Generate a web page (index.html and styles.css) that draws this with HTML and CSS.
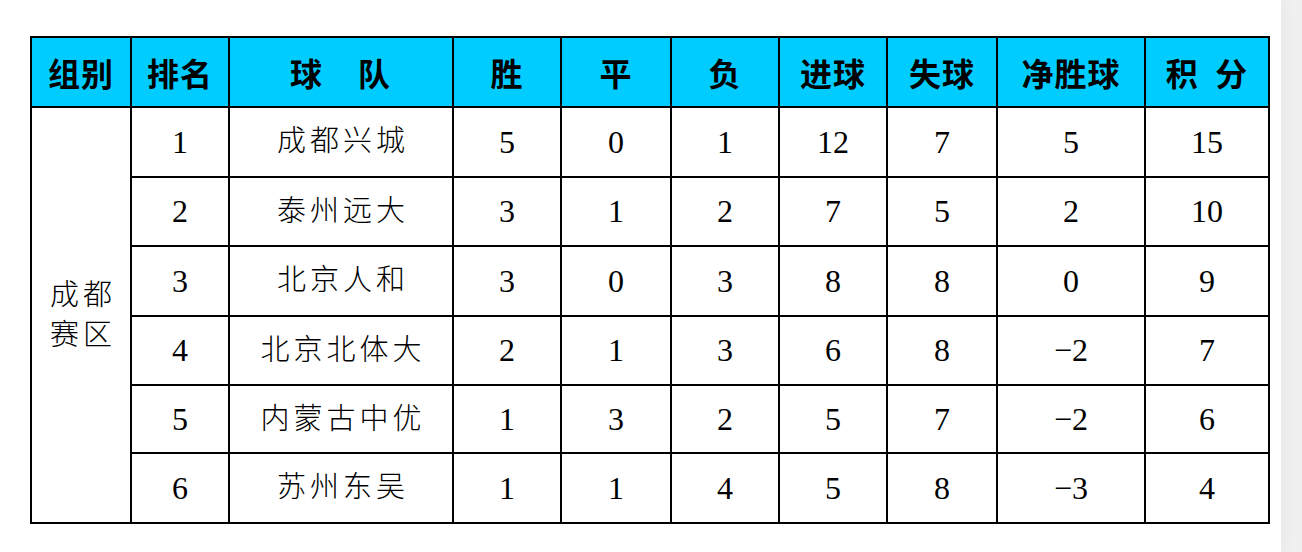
FILE: index.html
```html
<!DOCTYPE html>
<html lang="zh-CN">
<head>
<meta charset="utf-8">
<title>成都赛区积分榜</title>
<link rel="stylesheet" href="styles.css">
</head>
<body>
<div class="page">
  <table class="standings">
    <colgroup>
      <col class="c-group"><col class="c-rank"><col class="c-team"><col class="c-w"><col class="c-d"><col class="c-l"><col class="c-gf"><col class="c-ga"><col class="c-gd"><col class="c-pts">
    </colgroup>
    <thead>
      <tr>
        <th>组别</th><th>排名</th><th class="wide">球&emsp;队</th><th>胜</th><th>平</th><th>负</th><th>进球</th><th>失球</th><th>净胜球</th><th class="pts">积&nbsp;&nbsp;分</th>
      </tr>
    </thead>
    <tbody>
      <tr><td rowspan="6" class="group">成都<br>赛区</td><td>1</td><td class="team">成都兴城</td><td>5</td><td>0</td><td>1</td><td>12</td><td>7</td><td>5</td><td>15</td></tr>
      <tr><td>2</td><td class="team">泰州远大</td><td>3</td><td>1</td><td>2</td><td>7</td><td>5</td><td>2</td><td>10</td></tr>
      <tr><td>3</td><td class="team">北京人和</td><td>3</td><td>0</td><td>3</td><td>8</td><td>8</td><td>0</td><td>9</td></tr>
      <tr><td>4</td><td class="team">北京北体大</td><td>2</td><td>1</td><td>3</td><td>6</td><td>8</td><td>−2</td><td>7</td></tr>
      <tr class="short"><td>5</td><td class="team">内蒙古中优</td><td>1</td><td>3</td><td>2</td><td>5</td><td>7</td><td>−2</td><td>6</td></tr>
      <tr><td>6</td><td class="team">苏州东吴</td><td>1</td><td>1</td><td>4</td><td>5</td><td>8</td><td>−3</td><td>4</td></tr>
    </tbody>
  </table>
</div>
</body>
</html>
```
FILE: styles.css
```css
html, body {
  margin: 0;
  padding: 0;
}
body {
  background: #f0f0f0;
  width: 1302px;
  height: 552px;
  overflow: hidden;
}
.page {
  width: 1281px;
  height: 552px;
  background: #ffffff;
  box-shadow: 4px 0 14px rgba(0, 0, 0, 0.04);
  padding: 36px 0 0 30px;
  box-sizing: border-box;
}
.standings {
  border-collapse: collapse;
  table-layout: fixed;
  width: 1238px;
}
.c-group { width: 100px; }
.c-rank { width: 98px; }
.c-team { width: 224px; }
.c-w { width: 108px; }
.c-d { width: 110px; }
.c-l { width: 108px; }
.c-gf { width: 108px; }
.c-ga { width: 110px; }
.c-gd { width: 148px; }
.c-pts { width: 124px; }
.standings th,
.standings td {
  border: 2px solid #000;
  padding: 0;
  text-align: center;
  vertical-align: middle;
  color: #000;
}
.standings th {
  background: #00ccff;
  height: 68px;
  font-family: "Noto Sans CJK SC", "Noto Sans", sans-serif;
  font-weight: 700;
  font-size: 32px;
  letter-spacing: 1px;
  line-height: 1;
}
.standings th.wide {
  letter-spacing: 2px;
}
.standings td {
  height: 67.5px;
  font-family: "Liberation Serif", "Noto Sans CJK SC", serif;
  font-weight: 300;
  font-size: 32px;
  line-height: 1;
}
.standings tr.short td {
  height: 66px;
}
.standings td.team {
  font-size: 29px;
  letter-spacing: 4px;
  padding-left: 4px;
}
.standings td.group {
  font-size: 29px;
  letter-spacing: 4px;
  line-height: 40px;
  padding-left: 4px;
}
```
